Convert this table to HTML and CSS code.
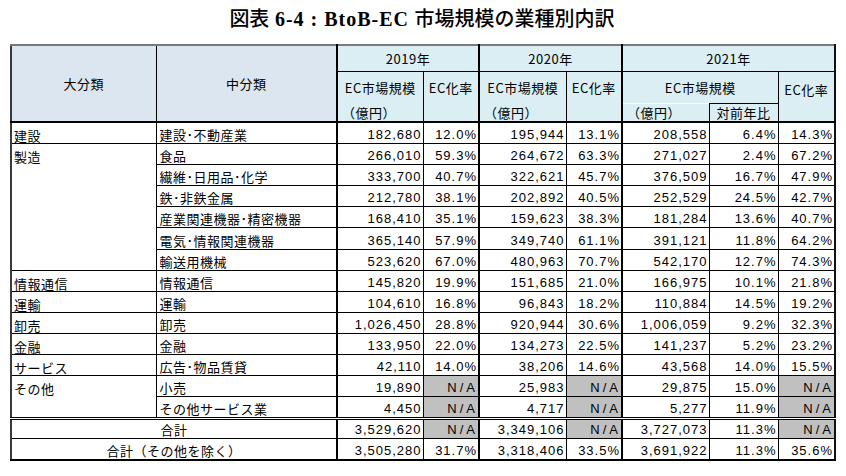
FILE: index.html
```html
<!DOCTYPE html>
<html lang="ja">
<head>
<meta charset="utf-8">
<title>BtoB-EC 市場規模の業種別内訳</title>
<link rel="stylesheet" href="styles.css">
</head>
<body>
<h1 class="title"><span class="jp">図表</span> <span class="lat">6-4 : BtoB-EC</span> <span class="jp">市場規模の業種別内訳</span></h1>
<table class="grid">
  <colgroup>
    <col class="c1"><col class="c2"><col class="c3"><col class="c4"><col class="c5"><col class="c6"><col class="c7"><col class="c8"><col class="c9">
  </colgroup>
  <thead>
    <tr class="h1">
      <th class="cat gl" rowspan="3">大分類</th>
      <th class="cat gr" rowspan="3">中分類</th>
      <th class="yr gr" colspan="2">2019年</th>
      <th class="yr gr" colspan="2">2020年</th>
      <th class="yr" colspan="3">2021年</th>
    </tr>
    <tr class="h2">
      <th class="sub nb">EC市場規模</th>
      <th class="sub nb gr">EC化率</th>
      <th class="sub nb">EC市場規模</th>
      <th class="sub nb gr">EC化率</th>
      <th class="sub nb" colspan="2">EC市場規模</th>
      <th class="sub tall" rowspan="2">EC化率</th>
    </tr>
    <tr class="h3">
      <th class="sub nt yen">（億円）</th>
      <th class="sub nt gr"></th>
      <th class="sub nt yen">（億円）</th>
      <th class="sub nt gr"></th>
      <th class="sub nt yen">（億円）</th>
      <th class="sub yoy">対前年比</th>
    </tr>
  </thead>
  <tbody>
    <tr><td class="big"><span class="t">建設</span></td><td class="mid gr">建設･不動産業</td><td class="num">182,680</td><td class="num gr">12.0%</td><td class="num">195,944</td><td class="num gr">13.1%</td><td class="num">208,558</td><td class="num">6.4%</td><td class="num">14.3%</td></tr>
    <tr><td class="big" rowspan="6"><span class="t">製造</span></td><td class="mid gr">食品</td><td class="num">266,010</td><td class="num gr">59.3%</td><td class="num">264,672</td><td class="num gr">63.3%</td><td class="num">271,027</td><td class="num">2.4%</td><td class="num">67.2%</td></tr>
    <tr><td class="mid gr">繊維･日用品･化学</td><td class="num">333,700</td><td class="num gr">40.7%</td><td class="num">322,621</td><td class="num gr">45.7%</td><td class="num">376,509</td><td class="num">16.7%</td><td class="num">47.9%</td></tr>
    <tr><td class="mid gr">鉄･非鉄金属</td><td class="num">212,780</td><td class="num gr">38.1%</td><td class="num">202,892</td><td class="num gr">40.5%</td><td class="num">252,529</td><td class="num">24.5%</td><td class="num">42.7%</td></tr>
    <tr><td class="mid gr">産業関連機器･精密機器</td><td class="num">168,410</td><td class="num gr">35.1%</td><td class="num">159,623</td><td class="num gr">38.3%</td><td class="num">181,284</td><td class="num">13.6%</td><td class="num">40.7%</td></tr>
    <tr><td class="mid gr">電気･情報関連機器</td><td class="num">365,140</td><td class="num gr">57.9%</td><td class="num">349,740</td><td class="num gr">61.1%</td><td class="num">391,121</td><td class="num">11.8%</td><td class="num">64.2%</td></tr>
    <tr><td class="mid gr">輸送用機械</td><td class="num">523,620</td><td class="num gr">67.0%</td><td class="num">480,963</td><td class="num gr">70.7%</td><td class="num">542,170</td><td class="num">12.7%</td><td class="num">74.3%</td></tr>
    <tr><td class="big"><span class="t">情報通信</span></td><td class="mid gr">情報通信</td><td class="num">145,820</td><td class="num gr">19.9%</td><td class="num">151,685</td><td class="num gr">21.0%</td><td class="num">166,975</td><td class="num">10.1%</td><td class="num">21.8%</td></tr>
    <tr><td class="big"><span class="t">運輸</span></td><td class="mid gr">運輸</td><td class="num">104,610</td><td class="num gr">16.8%</td><td class="num">96,843</td><td class="num gr">18.2%</td><td class="num">110,884</td><td class="num">14.5%</td><td class="num">19.2%</td></tr>
    <tr><td class="big"><span class="t">卸売</span></td><td class="mid gr">卸売</td><td class="num">1,026,450</td><td class="num gr">28.8%</td><td class="num">920,944</td><td class="num gr">30.6%</td><td class="num">1,006,059</td><td class="num">9.2%</td><td class="num">32.3%</td></tr>
    <tr><td class="big"><span class="t">金融</span></td><td class="mid gr">金融</td><td class="num">133,950</td><td class="num gr">22.0%</td><td class="num">134,273</td><td class="num gr">22.5%</td><td class="num">141,237</td><td class="num">5.2%</td><td class="num">23.2%</td></tr>
    <tr><td class="big"><span class="t">サービス</span></td><td class="mid gr">広告･物品賃貸</td><td class="num">42,110</td><td class="num gr">14.0%</td><td class="num">38,206</td><td class="num gr">14.6%</td><td class="num">43,568</td><td class="num">14.0%</td><td class="num">15.5%</td></tr>
    <tr><td class="big" rowspan="2"><span class="t">その他</span></td><td class="mid gr">小売</td><td class="num">19,890</td><td class="num na gr">N/A</td><td class="num">25,983</td><td class="num na gr">N/A</td><td class="num">29,875</td><td class="num">15.0%</td><td class="num na">N/A</td></tr>
    <tr><td class="mid gr">その他サービス業</td><td class="num">4,450</td><td class="num na gr">N/A</td><td class="num">4,717</td><td class="num na gr">N/A</td><td class="num">5,277</td><td class="num">11.9%</td><td class="num na">N/A</td></tr>
  </tbody>
  <tfoot>
    <tr class="total"><td class="sum gr" colspan="2">合計</td><td class="num">3,529,620</td><td class="num na gr">N/A</td><td class="num">3,349,106</td><td class="num na gr">N/A</td><td class="num">3,727,073</td><td class="num">11.3%</td><td class="num na">N/A</td></tr>
    <tr class="total2"><td class="sum gr" colspan="2">合計（その他を除く）</td><td class="num">3,505,280</td><td class="num gr">31.7%</td><td class="num">3,318,406</td><td class="num gr">33.5%</td><td class="num">3,691,922</td><td class="num">11.3%</td><td class="num">35.6%</td></tr>
  </tfoot>
</table>
</body>
</html>
```

FILE: styles.css
```css
html, body {
  margin: 0;
  padding: 0;
  background: #ffffff;
}

body {
  font-family: "Liberation Sans", "Noto Sans CJK JP", sans-serif;
  color: #000000;
}

.title {
  margin: 0;
  height: 44px;
  line-height: 36px;
  text-align: center;
  font-size: 20px;
  font-weight: normal;
  padding-right: 2px;
  box-sizing: border-box;
  white-space: pre;
}

.title .jp {
  font-family: "Noto Sans CJK JP", sans-serif;
  font-weight: 500;
}

.title .lat {
  font-family: "Liberation Serif", "Noto Sans CJK JP", serif;
  font-weight: bold;
  letter-spacing: 1px;
}

.grid {
  margin-left: 10px;
  width: 824px;
  table-layout: fixed;
  border-collapse: collapse;
  border-top: 2px solid #7a7a7a;
  border-left: 2px solid #3a3a3a;
  border-right: 2px solid #111111;
  border-bottom: 2px solid #000000;
  font-size: 13px;
}

.c1 { width: 145px; }
.c2 { width: 181px; }
.c3 { width: 86px; }
.c4 { width: 56px; }
.c5 { width: 87px; }
.c6 { width: 56px; }
.c7 { width: 87px; }
.c8 { width: 69px; }
.c9 { width: 57px; }

th, td {
  border: 1px solid #000000;
  padding: 0;
  overflow: hidden;
  white-space: nowrap;
  line-height: 15px;
}

th {
  font-weight: normal;
  text-align: center;
  font-family: "Noto Sans CJK JP", "Liberation Sans", sans-serif;
  letter-spacing: 0.5px;
}

.h1 th { height: 25px; }
.h2 th { height: 31px; }
.h3 th { height: 17px; }

thead tr.h3 th, thead th[rowspan="3"], thead .h2 th[rowspan="2"] {
  border-bottom: 2px solid #000000;
}

.cat { background: #dce6f1; }
.yr, .sub { background: #daeef3; }

.sub.nb { border-bottom: none; }
.sub.nt { border-top: none; }
.sub.yoy { border-top: 1px solid #000000; }
.sub.yen { text-align: left; padding-left: 4px; }
.sub.tall { vertical-align: top; padding-top: 10px; }

.gr { border-right: 2px solid #000000; }
.gl { border-right: 1px solid #000000; }

tbody td, tfoot td {
  height: 19.1px;
}

.big {
  vertical-align: top;
  padding-left: 2px;
  font-family: "Noto Sans CJK JP", sans-serif;
  letter-spacing: 0.5px;
}

.big .t {
  display: block;
  margin-top: 5px;
  margin-bottom: -2px;
}

.mid {
  padding-left: 3px;
  font-family: "Noto Sans CJK JP", sans-serif;
  letter-spacing: 0.5px;
  vertical-align: bottom;
  padding-bottom: 1px;
}

.num {
  text-align: right;
  padding-right: 1px;
  letter-spacing: 1px;
  vertical-align: bottom;
  padding-bottom: 1px;
}

.na {
  background: #c0c0c0;
  letter-spacing: 3px;
  padding-right: 0;
}

.sum {
  text-align: center;
  font-family: "Noto Sans CJK JP", sans-serif;
  letter-spacing: 0.5px;
  vertical-align: bottom;
  padding-bottom: 1px;
}

tfoot tr.total td {
  border-top: 3px double #000000;
  height: 17px;
}
```
